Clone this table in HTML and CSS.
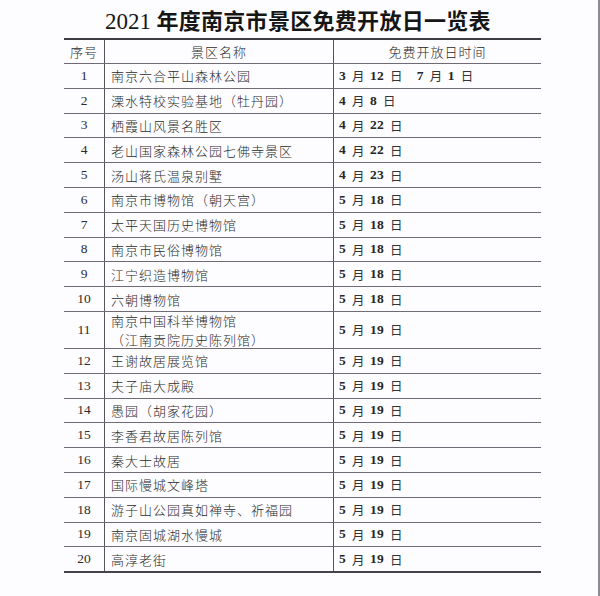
FILE: index.html
```html
<!DOCTYPE html>
<html lang="zh-CN">
<head>
<meta charset="utf-8">
<title>2021年度南京市景区免费开放日一览表</title>
<link rel="stylesheet" href="styles.css">
</head>
<body>
<div class="page">
  <h1 class="title"><span class="num">2021</span> 年度南京市景区免费开放日一览表</h1>
  <div class="sheet">
    <div class="row head">
      <div class="c idx cjk">序号</div>
      <div class="c name mid">景区名称</div>
      <div class="c date mid cjk">免费开放日时间</div>
    </div>
    <div class="row"><div class="c idx">1</div><div class="c name">南京六合平山森林公园</div><div class="c date">3<span class="k">月</span>12<span class="k">日</span><span class="gap"></span>7<span class="k">月</span>1<span class="k">日</span></div></div>
    <div class="row"><div class="c idx">2</div><div class="c name">溧水特校实验基地（牡丹园）</div><div class="c date">4<span class="k">月</span>8<span class="k">日</span></div></div>
    <div class="row"><div class="c idx">3</div><div class="c name">栖霞山风景名胜区</div><div class="c date">4<span class="k">月</span>22<span class="k">日</span></div></div>
    <div class="row"><div class="c idx">4</div><div class="c name">老山国家森林公园七佛寺景区</div><div class="c date">4<span class="k">月</span>22<span class="k">日</span></div></div>
    <div class="row"><div class="c idx">5</div><div class="c name">汤山蒋氏温泉别墅</div><div class="c date">4<span class="k">月</span>23<span class="k">日</span></div></div>
    <div class="row"><div class="c idx">6</div><div class="c name">南京市博物馆（朝天宫）</div><div class="c date">5<span class="k">月</span>18<span class="k">日</span></div></div>
    <div class="row"><div class="c idx">7</div><div class="c name">太平天国历史博物馆</div><div class="c date">5<span class="k">月</span>18<span class="k">日</span></div></div>
    <div class="row"><div class="c idx">8</div><div class="c name">南京市民俗博物馆</div><div class="c date">5<span class="k">月</span>18<span class="k">日</span></div></div>
    <div class="row"><div class="c idx">9</div><div class="c name">江宁织造博物馆</div><div class="c date">5<span class="k">月</span>18<span class="k">日</span></div></div>
    <div class="row"><div class="c idx">10</div><div class="c name">六朝博物馆</div><div class="c date">5<span class="k">月</span>18<span class="k">日</span></div></div>
    <div class="row tall"><div class="c idx">11</div><div class="c name two">南京中国科举博物馆<br>（江南贡院历史陈列馆）</div><div class="c date">5<span class="k">月</span>19<span class="k">日</span></div></div>
    <div class="row"><div class="c idx">12</div><div class="c name">王谢故居展览馆</div><div class="c date">5<span class="k">月</span>19<span class="k">日</span></div></div>
    <div class="row"><div class="c idx">13</div><div class="c name">夫子庙大成殿</div><div class="c date">5<span class="k">月</span>19<span class="k">日</span></div></div>
    <div class="row"><div class="c idx">14</div><div class="c name">愚园（胡家花园）</div><div class="c date">5<span class="k">月</span>19<span class="k">日</span></div></div>
    <div class="row"><div class="c idx">15</div><div class="c name">李香君故居陈列馆</div><div class="c date">5<span class="k">月</span>19<span class="k">日</span></div></div>
    <div class="row"><div class="c idx">16</div><div class="c name">秦大士故居</div><div class="c date">5<span class="k">月</span>19<span class="k">日</span></div></div>
    <div class="row"><div class="c idx">17</div><div class="c name">国际慢城文峰塔</div><div class="c date">5<span class="k">月</span>19<span class="k">日</span></div></div>
    <div class="row"><div class="c idx">18</div><div class="c name">游子山公园真如禅寺、祈福园</div><div class="c date">5<span class="k">月</span>19<span class="k">日</span></div></div>
    <div class="row"><div class="c idx">19</div><div class="c name">南京固城湖水慢城</div><div class="c date">5<span class="k">月</span>19<span class="k">日</span></div></div>
    <div class="row last"><div class="c idx">20</div><div class="c name">高淳老街</div><div class="c date">5<span class="k">月</span>19<span class="k">日</span></div></div>
  </div>
</div>
</body>
</html>
```

FILE: styles.css
```css
html, body {
  margin: 0;
  padding: 0;
  background: #fdfdff;
}

.page {
  width: 600px;
  height: 596px;
  box-sizing: border-box;
  border-right: 2px solid #8d8b93;
  padding-right: 2px;
  overflow: hidden;
}

.title {
  margin: 0;
  height: 38px;
  line-height: 38px;
  text-align: center;
  font-family: "Noto Sans CJK SC", sans-serif;
  font-size: 22px;
  font-weight: 700;
  letter-spacing: 0.3px;
  color: #161616;
}

.title .num {
  font-family: "Liberation Serif", serif;
  font-size: 23px;
  font-weight: 400;
  letter-spacing: 0;
}

.sheet {
  margin-left: 64px;
  width: 477px;
  border-top: 2px solid #3f3c44;
  border-bottom: 2px solid #46434a;
}

.row {
  display: grid;
  grid-template-columns: 41px 229px 207px;
  height: 24.8px;
  box-sizing: border-box;
  border-bottom: 1px solid #6f6a74;
}

.row.head {
  height: 24px;
}

.row.tall {
  height: 37px;
}

.row.last {
  border-bottom: none;
  height: 23.8px;
}

.c {
  display: flex;
  align-items: center;
  overflow: hidden;
  white-space: nowrap;
  color: #2b2b2b;
}

.idx {
  justify-content: center;
  border-right: 1px solid #58545c;
  font-family: "Liberation Serif", serif;
  font-size: 13.5px;
}

.idx.cjk {
  font-family: "Noto Sans CJK SC", sans-serif;
  font-size: 13px;
  font-weight: 300;
  letter-spacing: 1px;
}

.name {
  border-right: 1px solid #58545c;
  padding-left: 6px;
  font-family: "Noto Sans CJK SC", sans-serif;
  font-size: 13px;
  font-weight: 300;
  letter-spacing: 1px;
}

.name.two {
  white-space: normal;
  line-height: 19px;
}

.date {
  padding-left: 5px;
  font-family: "Liberation Serif", serif;
  font-size: 13.5px;
  font-weight: 700;
  letter-spacing: 0.3px;
  color: #262626;
}

.date .k {
  font-family: "Noto Sans CJK SC", sans-serif;
  font-size: 12.5px;
  font-weight: 400;
  margin: 0 5px 0 6px;
  color: #333;
}

.date .gap {
  width: 9px;
}

.date.cjk {
  font-family: "Noto Sans CJK SC", sans-serif;
  font-size: 13px;
  font-weight: 300;
  letter-spacing: 1px;
}

.mid {
  justify-content: center;
  padding-left: 0;
}
```
